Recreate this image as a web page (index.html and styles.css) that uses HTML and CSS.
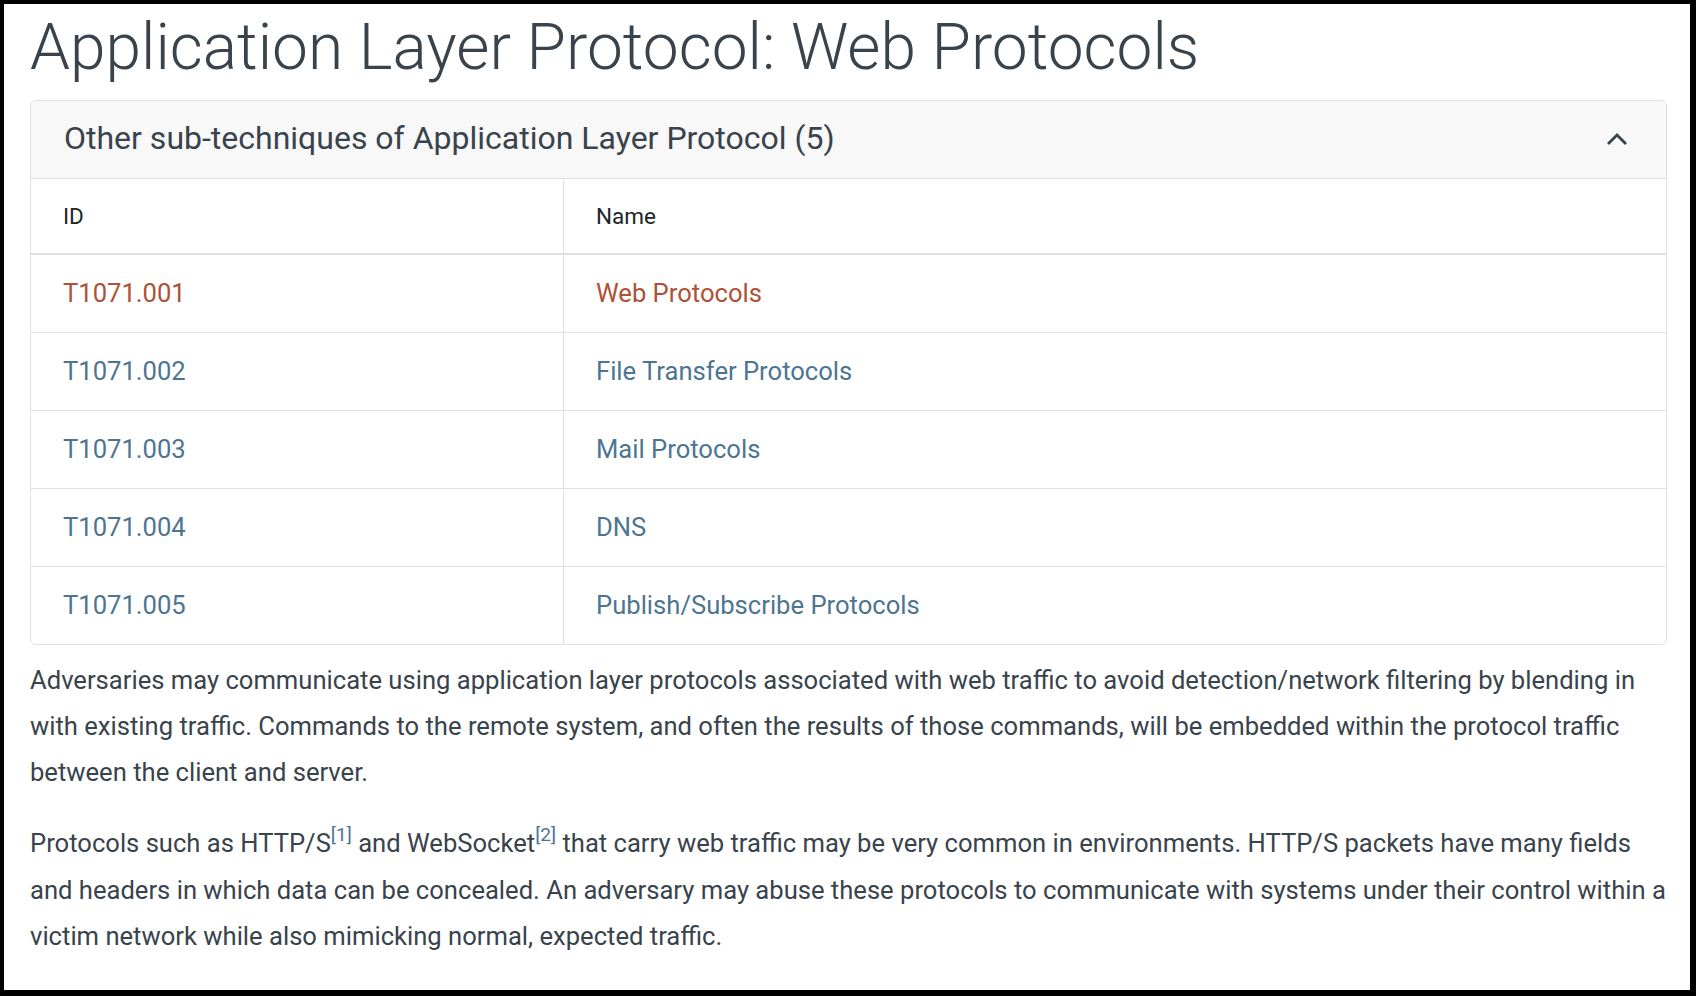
FILE: index.html
```html
<!DOCTYPE html>
<html lang="en">
<head>
<meta charset="utf-8">
<title>Application Layer Protocol: Web Protocols</title>
<link rel="stylesheet" href="styles.css">
</head>
<body>
<div class="frame">
  <div class="page">
    <h1 class="title">Application Layer Protocol: Web Protocols</h1>
    <div class="card">
      <div class="card-header">
        <span class="card-title">Other sub-techniques of Application Layer Protocol (5)</span>
        <svg class="chevron" width="20" height="13" viewBox="0 0 20 13" aria-hidden="true">
          <polyline points="2,11 10,3 18,11" fill="none" stroke="#39434c" stroke-width="2.8" stroke-linecap="square"/>
        </svg>
      </div>
      <table class="subs">
        <thead>
          <tr><th class="col-id">ID</th><th>Name</th></tr>
        </thead>
        <tbody>
          <tr class="active"><td>T1071.001</td><td>Web Protocols</td></tr>
          <tr><td><a href="#">T1071.002</a></td><td><a href="#">File Transfer Protocols</a></td></tr>
          <tr><td><a href="#">T1071.003</a></td><td><a href="#">Mail Protocols</a></td></tr>
          <tr><td><a href="#">T1071.004</a></td><td><a href="#">DNS</a></td></tr>
          <tr><td><a href="#">T1071.005</a></td><td><a href="#">Publish/Subscribe Protocols</a></td></tr>
        </tbody>
      </table>
    </div>
    <p class="desc">Adversaries may communicate using application layer protocols associated with web traffic to avoid detection/network filtering by blending in with existing traffic. Commands to the remote system, and often the results of those commands, will be embedded within the protocol traffic between the client and server.</p>
    <p class="desc">Protocols such as HTTP/S<sup><a href="#">[1]</a></sup> and WebSocket<sup><a href="#">[2]</a></sup> that carry web traffic may be very common in environments. HTTP/S packets have many fields and headers in which data can be concealed. An adversary may abuse these protocols to communicate with systems under their control within a victim network while also mimicking normal, expected traffic.</p>
  </div>
</div>
</body>
</html>
```

FILE: styles.css
```css
html, body {
  margin: 0;
  padding: 0;
  background: #000;
}
.frame {
  width: 1696px;
  height: 996px;
  box-sizing: border-box;
  padding: 4px 6px 6px 4px;
  background: #000;
}
.page {
  background: #fff;
  height: 100%;
  box-sizing: border-box;
  padding: 6px 23px 0 26px;
  overflow: hidden;
  font-family: Roboto, "Liberation Sans", sans-serif;
  color: #39434c;
  font-size: 25.6px;
}
.title {
  margin: 0 0 13px 0;
  font-size: 64px;
  font-weight: 300;
  line-height: 1.2;
  color: #39434c;
}
.card {
  border: 1px solid #e0e0e0;
  border-radius: 6px;
  overflow: hidden;
}
.card-header {
  display: flex;
  align-items: center;
  justify-content: space-between;
  background: #f8f8f8;
  border-bottom: 1px solid #e0e0e0;
  height: 77px;
  padding: 0 39px 0 33px;
}
.card-title {
  font-size: 32px;
  color: #39434c;
  line-height: 1.3;
  padding-bottom: 2px;
}
.chevron {
  display: block;
  margin-bottom: 2px;
}
.subs {
  width: 100%;
  border-collapse: collapse;
  font-size: 25.6px;
}
.subs th {
  text-align: left;
  font-weight: 400;
  font-size: 22.5px;
  color: #212529;
  height: 74px;
  padding: 0 32px;
  border-bottom: 2px solid #dfdfdf;
}
.subs td {
  height: 77px;
  padding: 0 32px;
  border-top: 1px solid #e2e2e2;
}
.subs tbody tr:first-child td {
  border-top: none;
}
.subs th + th,
.subs td + td {
  border-left: 1px solid #e2e2e2;
}
.col-id {
  width: 468px;
}
.subs a {
  color: #4d7592;
  text-decoration: none;
}
.subs tr.active td {
  color: #ad5238;
}
.desc {
  margin: 12px 0 25px 0;
  line-height: 46.2px;
  font-size: 25.6px;
  color: #39434c;
}
.desc + .desc {
  margin-top: 0;
}
.desc sup {
  font-size: 0.75em;
  line-height: 0;
  vertical-align: 0.55em;
}
.desc sup a {
  color: #4d7592;
  text-decoration: none;
}
```
